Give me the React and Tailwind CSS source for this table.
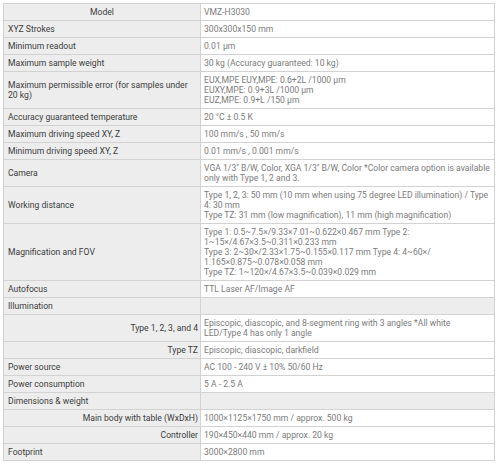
const rows = [
  { label: "Model", value: "VMZ-H3030", center: true },
  { label: "XYZ Strokes", value: "300x300x150 mm" },
  { label: "Minimum readout", value: "0.01 µm" },
  { label: "Maximum sample weight", value: "30 kg (Accuracy guaranteed: 10 kg)" },
  {
    label: ["Maximum permissible error (for samples under", "20 kg)"],
    value: ["EUX,MPE EUY,MPE: 0.6+2L /1000 µm", "EUXY,MPE: 0.9+3L /1000 µm", "EUZ,MPE: 0.9+L /150 µm"],
  },
  { label: "Accuracy guaranteed temperature", value: "20 °C ± 0.5 K" },
  { label: "Maximum driving speed XY, Z", value: "100 mm/s , 50 mm/s" },
  { label: "Minimum driving speed XY, Z", value: "0.01 mm/s , 0.001 mm/s" },
  {
    label: "Camera",
    value: ["VGA 1/3\" B/W, Color, XGA 1/3\" B/W, Color *Color camera option is available", "only with Type 1, 2 and 3."],
  },
  {
    label: "Working distance",
    value: [
      "Type 1, 2, 3: 50 mm (10 mm when using 75 degree LED illumination) / Type",
      "4: 30 mm",
      "Type TZ: 31 mm (low magnification), 11 mm (high magnification)",
    ],
  },
  {
    label: "Magnification and FOV",
    value: [
      "Type 1: 0.5~7.5×/9.33×7.01~0.622×0.467 mm Type 2:",
      "1~15×/4.67×3.5~0.311×0.233 mm",
      "Type 3: 2~30×/2.33×1.75~0.155×0.117 mm Type 4: 4~60×/",
      "1.165×0.875~0.078×0.058 mm",
      "Type TZ: 1~120×/4.67×3.5~0.039×0.029 mm",
    ],
  },
  { label: "Autofocus", value: "TTL Laser AF/Image AF" },
  { label: "Illumination", section: true },
  {
    label: "Type 1, 2, 3, and 4",
    sub: true,
    value: ["Episcopic, diascopic, and 8-segment ring with 3 angles *All white", "LED/Type 4 has only 1 angle"],
  },
  { label: "Type TZ", sub: true, value: "Episcopic, diascopic, darkfield" },
  { label: "Power source", value: "AC 100 - 240 V ± 10% 50/60 Hz" },
  { label: "Power consumption", value: "5 A - 2.5 A" },
  { label: "Dimensions & weight", section: true },
  { label: "Main body with table (WxDxH)", sub: true, value: "1000×1125×1750 mm / approx. 500 kg" },
  { label: "Controller", sub: true, value: "190×450×440 mm / approx. 20 kg" },
  { label: "Footprint", value: "3000×2800 mm" },
];

function Lines({ text }) {
  if (!Array.isArray(text)) return text;
  return text.map((t, i) => (
    <span key={i}>
      {i > 0 && <br />}
      {t}
    </span>
  ));
}

export default function App() {
  return (
    <div className="w-[500px] h-[465px] bg-white pt-[3px] pl-[3px]" style={{ fontFamily: "Roboto, sans-serif" }}>
      <table className="w-[492px] border-collapse text-[8.6px] leading-[10px] table-fixed">
        <colgroup>
          <col className="w-[197px]" />
          <col />
        </colgroup>
        <tbody>
          {rows.map((r, i) => (
            <tr key={i}>
              <td
                className={`border border-[#d2d2d2] bg-[#ededed] text-[#3c3c3c] py-[3px] align-middle ${
                  r.center ? "text-center px-[3px]" : r.sub ? "text-right pr-[2px] pl-[3px]" : "text-left pl-[4px] pr-[3px]"
                }`}
              >
                <Lines text={r.label} />
              </td>
              <td
                className={`border border-[#d2d2d2] py-[3px] pl-[3px] pr-[2px] text-[#7b7b7b] align-middle ${
                  r.section ? "bg-[#ededed]" : "bg-white"
                }`}
              >
                {r.section ? "\u00a0" : <Lines text={r.value} />}
              </td>
            </tr>
          ))}
        </tbody>
      </table>
    </div>
  );
}
